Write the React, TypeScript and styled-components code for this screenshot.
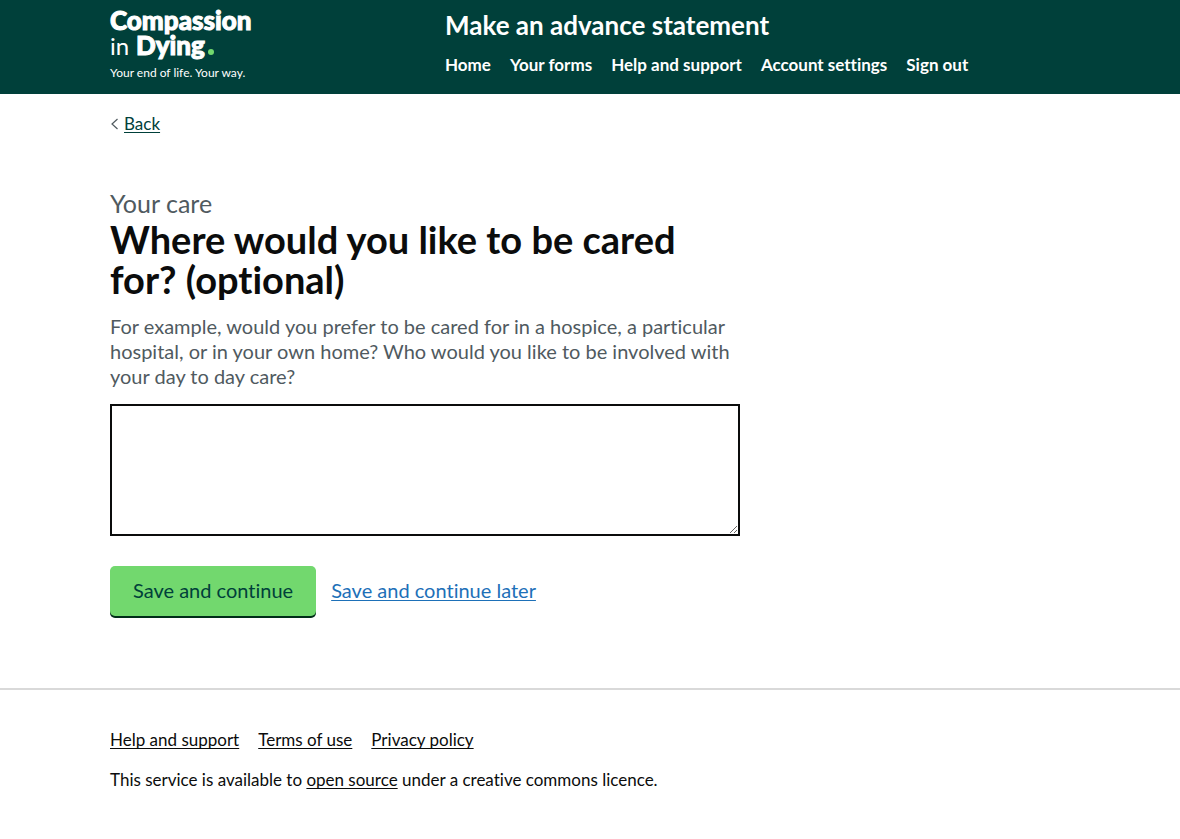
import React from "react";
import styled, { createGlobalStyle } from "styled-components";

const GlobalStyle = createGlobalStyle`
  *, *::before, *::after { box-sizing: border-box; }
  body {
    margin: 0;
    background: #fff;
    color: #0b0c0c;
    font-family: Lato, "Liberation Sans", sans-serif;
    font-size: 17px;
    font-variant-ligatures: none;
    line-height: 20px;
  }
`;

const Container = styled.div`
  max-width: 960px;
  margin: 0 auto;
  @media (max-width: 1000px) { margin: 0 20px; }
`;

const Header = styled.header`
  background: #00403a;
  color: #fff;
`;

const HeaderRow = styled(Container)`
  display: flex;
  min-height: 94px;
`;

const LogoLink = styled.a`
  flex: 0 0 calc(100% / 3);
  padding-top: 9px;
  color: #fff;
`;

const Logo = styled.svg`
  display: block;
  overflow: visible;
`;

const HeaderContent = styled.div`
  padding: 10px 0 0 15px;
`;

const ServiceName = styled.a`
  display: block;
  color: inherit;
  font-size: 26px;
  font-weight: 700;
  line-height: 30px;
  text-decoration: none;
`;

const LinkList = styled.ul`
  display: flex;
  flex-wrap: wrap;
  gap: 10px 19px;
  margin: 0;
  padding: 0;
  list-style: none;
`;

const NavList = styled(LinkList)`
  margin-top: 15px;
`;

const NavLink = styled.a`
  color: inherit;
  font-weight: 700;
  text-decoration: none;
`;

const TextLink = styled.a`
  color: inherit;
  text-decoration: underline;
  text-decoration-thickness: 1px;
  text-underline-offset: 2px;
  text-decoration-skip-ink: none;
`;

const BackLink = styled(TextLink)`
  display: inline-flex;
  align-items: center;
  gap: 5px;
  margin-top: 20px;
  color: #00403a;
  text-decoration: none;
  span {
    text-decoration: underline;
    text-decoration-thickness: 1px;
    text-underline-offset: 2px;
    text-decoration-skip-ink: none;
  }
`;

const Main = styled.main`
  max-width: 630px;
  padding: 54px 0 72px;
`;

const Caption = styled.span`
  display: block;
  color: #505a5f;
  font-size: 25px;
  line-height: 30px;
`;

const Title = styled.h1`
  margin: 0 0 15px;
  padding-top: 1px;
  font-size: 38px;
  font-weight: 700;
  line-height: 40px;
`;

const Hint = styled.p`
  margin: 0 0 15px;
  color: #505a5f;
  font-size: 20px;
  line-height: 25px;
`;

const TextArea = styled.textarea`
  display: block;
  width: 100%;
  height: 132px;
  padding: 5px;
  border: 2px solid #0b0c0c;
  border-radius: 0;
  background: #fff;
  font: inherit;
  font-size: 20px;
  line-height: 25px;
  resize: vertical;
`;

const Actions = styled.div`
  display: flex;
  flex-wrap: wrap;
  align-items: baseline;
  gap: 15px;
  margin-top: 30px;
  font-size: 20px;
  line-height: 25px;
`;

const SaveButton = styled.button`
  height: 50px;
  padding: 0 23px 2px;
  border: 0;
  border-radius: 5px;
  background: #72d86e;
  box-shadow: 0 2px 0 #002d18;
  color: #00403a;
  font: inherit;
  cursor: pointer;
`;

const LaterLink = styled(TextLink)`
  color: #1d70b8;
`;

const Footer = styled.footer`
  padding: 40px 0;
  border-top: 2px solid #d9d9d9;
`;

const Licence = styled.p`
  margin: 20px 0 0;
`;

const navItems = ["Home", "Your forms", "Help and support", "Account settings", "Sign out"];
const footerItems = ["Help and support", "Terms of use", "Privacy policy"];

export default function App() {
  return (
    <>
      <GlobalStyle />
      <Header>
        <HeaderRow>
          <LogoLink href="#" aria-label="Compassion in Dying">
            <Logo width="142" height="74" viewBox="0 0 142 74" fill="#fff">
              <g fontSize="26" fontWeight="900" stroke="#fff" strokeWidth="1">
                <text x="0" y="21">Compassion</text>
                <text x="26" y="46">Dying</text>
              </g>
              <text x="0" y="46" fontSize="24">in</text>
              <circle cx="101" cy="43" r="3" fill="#72d86e" />
              <text x="0" y="68" fontSize="12">Your end of life. Your way.</text>
            </Logo>
          </LogoLink>
          <HeaderContent>
            <ServiceName href="#">Make an advance statement</ServiceName>
            <nav aria-label="Main">
              <NavList>
                {navItems.map((item) => (
                  <li key={item}><NavLink href="#">{item}</NavLink></li>
                ))}
              </NavList>
            </nav>
          </HeaderContent>
        </HeaderRow>
      </Header>
      <Container>
        <BackLink href="#">
          <svg width="9" height="12" viewBox="0 0 9 12" fill="none" stroke="#505a5f" strokeWidth="1.2" aria-hidden="true">
            <path d="M7.5 1 L2 6 L7.5 11" />
          </svg>
          <span>Back</span>
        </BackLink>
        <Main>
          <form onSubmit={(event) => event.preventDefault()}>
            <Caption>Your care</Caption>
            <Title><label htmlFor="care-place">Where would you like to be cared for? (optional)</label></Title>
            <Hint id="care-place-hint">
              For example, would you prefer to be cared for in a hospice, a particular hospital, or in your own home? Who would you like to be involved with your day to day care?
            </Hint>
            <TextArea id="care-place" aria-describedby="care-place-hint" />
            <Actions>
              <SaveButton type="submit">Save and continue</SaveButton>
              <LaterLink href="#">Save and continue later</LaterLink>
            </Actions>
          </form>
        </Main>
      </Container>
      <Footer>
        <Container>
          <LinkList>
            {footerItems.map((item) => (
              <li key={item}><TextLink href="#">{item}</TextLink></li>
            ))}
          </LinkList>
          <Licence>
            This service is available to <TextLink href="#">open source</TextLink> under a creative commons licence.
          </Licence>
        </Container>
      </Footer>
    </>
  );
}
